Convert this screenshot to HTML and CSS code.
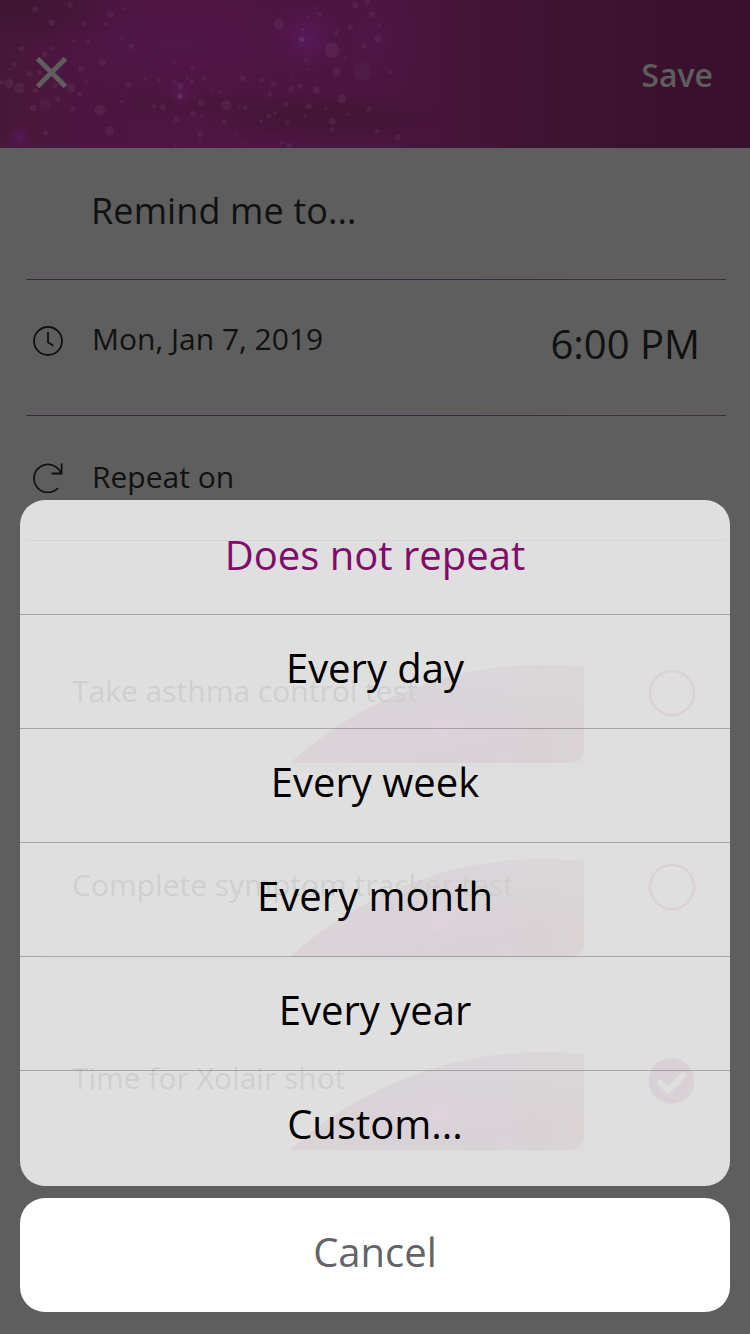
FILE: index.html
```html
<!DOCTYPE html>
<html lang="en">
<head>
<meta charset="utf-8">
<title>Reminder</title>
<link rel="stylesheet" href="styles.css">
</head>
<body>
<div class="screen">
  <header class="header">
    <svg class="header-art" viewBox="0 0 2250 444" preserveAspectRatio="none" aria-hidden="true">
      <defs>
        <linearGradient id="base" x1="0" x2="1"><stop offset="0" stop-color="#461838"/><stop offset=".12" stop-color="#4e1543"/><stop offset=".3" stop-color="#4f1543"/><stop offset=".5" stop-color="#4b1540"/><stop offset=".6" stop-color="#46143a"/><stop offset=".7" stop-color="#401434"/><stop offset=".86" stop-color="#3a122f"/><stop offset="1" stop-color="#38102b"/></linearGradient>
        <radialGradient id="glow"><stop offset="0" stop-color="#571a5b"/><stop offset=".5" stop-color="#551650" stop-opacity=".6"/><stop offset="1" stop-color="#501546" stop-opacity="0"/></radialGradient>
        <radialGradient id="shade"><stop offset="0" stop-color="#3f1533"/><stop offset=".6" stop-color="#411536" stop-opacity=".65"/><stop offset="1" stop-color="#451539" stop-opacity="0"/></radialGradient>
      </defs>
      <rect width="2250" height="444" fill="url(#base)"/>
      <ellipse cx="60" cy="20" rx="330" ry="130" fill="url(#shade)"/>
      <ellipse cx="530" cy="130" rx="480" ry="180" fill="url(#glow)" opacity=".25"/>
      <ellipse cx="1130" cy="120" rx="190" ry="200" fill="url(#glow)" opacity=".25"/>
      <ellipse cx="980" cy="355" rx="390" ry="75" fill="url(#shade)" opacity=".85"/>
      <ellipse cx="600" cy="312" rx="370" ry="40" fill="url(#shade)" opacity=".5"/>
      <circle cx="920" cy="115" r="115" fill="url(#glow)"/>
      <circle cx="542" cy="280" r="55" fill="url(#glow)" opacity=".7"/>
      <circle cx="58" cy="415" r="42" fill="url(#glow)"/>
      <g fill="#76566f" fill-opacity=".2">
        <circle cx="105" cy="27" r="9"/><circle cx="210" cy="15" r="9"/><circle cx="194" cy="9" r="4"/><circle cx="155" cy="67" r="10"/><circle cx="331" cy="43" r="10"/><circle cx="250" cy="70" r="7"/><circle cx="319" cy="72" r="6"/><circle cx="369" cy="26" r="5"/><circle cx="222" cy="122" r="5"/><circle cx="265" cy="123" r="6"/><circle cx="365" cy="116" r="4"/><circle cx="394" cy="139" r="9"/><circle cx="64" cy="147" r="8"/><circle cx="153" cy="145" r="6"/><circle cx="134" cy="163" r="8"/><circle cx="42" cy="193" r="8"/><circle cx="88" cy="221" r="9"/><circle cx="118" cy="217" r="7"/><circle cx="29" cy="208" r="4"/><circle cx="27" cy="250" r="14"/><circle cx="59" cy="264" r="16"/><circle cx="5" cy="247" r="7"/><circle cx="106" cy="271" r="8"/><circle cx="165" cy="256" r="8"/><circle cx="213" cy="264" r="14"/><circle cx="243" cy="207" r="9"/><circle cx="307" cy="188" r="10"/><circle cx="258" cy="247" r="4"/><circle cx="239" cy="283" r="8"/><circle cx="174" cy="297" r="8"/><circle cx="136" cy="313" r="17" opacity=".5"/><circle cx="100" cy="324" r="10"/><circle cx="218" cy="328" r="7"/><circle cx="299" cy="330" r="16"/><circle cx="136" cy="399" r="8"/><circle cx="329" cy="393" r="13"/><circle cx="366" cy="305" r="6"/><circle cx="386" cy="254" r="9"/><circle cx="436" cy="236" r="6"/><circle cx="477" cy="242" r="7"/><circle cx="522" cy="188" r="4"/><circle cx="577" cy="206" r="6"/><circle cx="562" cy="234" r="5"/><circle cx="523" cy="244" r="7"/><circle cx="575" cy="244" r="7"/><circle cx="612" cy="236" r="7"/><circle cx="541" cy="258" r="10"/><circle cx="539" cy="289" r="8" fill-opacity=".4"/><circle cx="583" cy="292" r="4"/><circle cx="604" cy="309" r="11"/><circle cx="634" cy="272" r="4"/><circle cx="662" cy="277" r="5"/><circle cx="679" cy="316" r="16"/><circle cx="718" cy="321" r="5"/><circle cx="735" cy="323" r="8"/><circle cx="462" cy="319" r="7"/><circle cx="489" cy="322" r="9"/><circle cx="529" cy="358" r="9"/><circle cx="580" cy="340" r="8"/><circle cx="604" cy="349" r="4"/><circle cx="602" cy="401" r="9"/><circle cx="673" cy="365" r="7"/><circle cx="600" cy="425" r="4"/><circle cx="527" cy="434" r="5"/><circle cx="705" cy="405" r="4"/><circle cx="736" cy="430" r="4"/><circle cx="728" cy="235" r="9"/><circle cx="784" cy="241" r="7"/><circle cx="821" cy="251" r="8"/><circle cx="809" cy="284" r="7"/><circle cx="874" cy="266" r="9"/><circle cx="900" cy="259" r="8"/><circle cx="949" cy="270" r="10"/><circle cx="857" cy="312" r="8"/><circle cx="824" cy="338" r="6"/><circle cx="806" cy="348" r="7"/><circle cx="784" cy="364" r="6"/><circle cx="862" cy="368" r="7"/><circle cx="915" cy="350" r="5"/><circle cx="926" cy="318" r="9"/><circle cx="977" cy="327" r="5"/><circle cx="1026" cy="296" r="13"/><circle cx="997" cy="364" r="11"/><circle cx="996" cy="388" r="7"/><circle cx="1046" cy="343" r="5"/><circle cx="1106" cy="328" r="8"/><circle cx="845" cy="428" r="6"/><circle cx="868" cy="437" r="8"/><circle cx="837" cy="71" r="16"/><circle cx="997" cy="151" r="23"/><circle cx="1009" cy="215" r="12"/><circle cx="1088" cy="215" r="28" opacity=".45"/><circle cx="905" cy="118" r="8" fill-opacity=".4"/><circle cx="908" cy="89" r="5"/><circle cx="927" cy="51" r="5"/><circle cx="958" cy="42" r="7"/><circle cx="948" cy="24" r="4"/><circle cx="1009" cy="98" r="7"/><circle cx="1051" cy="81" r="8"/><circle cx="1066" cy="15" r="9"/><circle cx="1102" cy="6" r="8"/><circle cx="1115" cy="43" r="9"/><circle cx="1035" cy="173" r="6"/><circle cx="1091" cy="138" r="8"/><circle cx="917" cy="180" r="6"/><circle cx="928" cy="165" r="4"/><circle cx="922" cy="207" r="4"/><circle cx="876" cy="183" r="3"/><circle cx="876" cy="237" r="3"/><circle cx="1134" cy="118" r="10"/><circle cx="1137" cy="77" r="5"/><circle cx="1171" cy="216" r="5"/><circle cx="1130" cy="393" r="7"/><circle cx="1193" cy="412" r="9"/>
      </g>
    </svg>
    <svg class="close" viewBox="0 0 30 30" aria-hidden="true"><path d="M1.500 1.500 28.500 28.500M28.500 1.500 1.500 28.500"/></svg>
    <span class="save">Save</span>
  </header>

  <main class="form">
    <div class="row title-row"><span class="title">Remind me to...</span></div>
    <div class="row date-row">
      <svg class="icon" viewBox="0 0 30 30" aria-hidden="true"><circle cx="15" cy="15" r="14"/><path d="M15 6v10.3l5.3 3.4"/></svg>
      <span class="label">Mon, Jan 7, 2019</span>
      <span class="time">6:00 PM</span>
    </div>
    <div class="row repeat-row">
      <svg class="icon" viewBox="0 0 30 30" aria-hidden="true"><path d="M25 25.2A14 14 0 1 1 28 10.3M28.6 .5V10.500H18.500"/></svg>
      <span class="label">Repeat on</span>
    </div>
    <svg class="defs" aria-hidden="true">
      <defs>
        <linearGradient id="petal" x1="0" x2="1"><stop offset="0" stop-color="#4c2635"/><stop offset=".35" stop-color="#40203c"/><stop offset=".7" stop-color="#3f2036"/><stop offset="1" stop-color="#402429"/></linearGradient>
        <linearGradient id="fade" x1="0" x2="0" y1="0" y2="1"><stop offset="0" stop-color="#5e5e5e" stop-opacity=".32"/><stop offset=".7" stop-color="#5e5e5e" stop-opacity="0"/></linearGradient>
        <radialGradient id="bloom"><stop offset="0" stop-color="#712e68"/><stop offset=".4" stop-color="#5c2450" stop-opacity=".55"/><stop offset="1" stop-color="#4c1f42" stop-opacity="0"/></radialGradient>
        <linearGradient id="badge" x1="0" x2="1"><stop offset="0" stop-color="#3a1a3b"/><stop offset="1" stop-color="#421c2b"/></linearGradient>
        <symbol id="swoosh" viewBox="0 0 294 100">
          <path d="M0 100C68 38 160 2 250 2Q274 2 294 4V100Z" fill="url(#petal)"/>
          <path d="M0 100C68 38 160 2 250 2Q274 2 294 4V100Z" fill="url(#fade)"/>
          <ellipse cx="165" cy="62" rx="85" ry="20" fill="url(#bloom)" opacity=".5"/>
          <circle cx="148" cy="65" r="28" fill="url(#bloom)" opacity=".85"/>
          <circle cx="216" cy="93" r="10" fill="url(#bloom)" opacity=".7"/>
        </symbol>
      </defs>
    </svg>
    <ul class="tasks">
      <li class="task">
        <div class="card"><svg class="swoosh"><use href="#swoosh"/></svg><span class="task-name">Take asthma control test</span></div>
        <svg class="check" viewBox="0 0 48 48"><circle class="ring" cx="24" cy="24" r="22"/></svg>
      </li>
      <li class="task">
        <div class="card"><svg class="swoosh"><use href="#swoosh"/></svg><span class="task-name">Complete symptom tracker test</span></div>
        <svg class="check" viewBox="0 0 48 48"><circle class="ring" cx="24" cy="24" r="22"/></svg>
      </li>
      <li class="task">
        <div class="card"><svg class="swoosh"><use href="#swoosh"/></svg><span class="task-name">Time for Xolair shot</span></div>
        <svg class="check" viewBox="0 0 48 48"><circle cx="23.500" cy="25" r="23" fill="url(#badge)"/><path class="tick" d="M10 24.500 20 34.500 37 17.500"/></svg>
      </li>
    </ul>
  </main>

  <div class="sheet">
    <ul class="options">
      <li class="option selected">Does not repeat</li>
      <li class="option">Every day</li>
      <li class="option">Every week</li>
      <li class="option">Every month</li>
      <li class="option">Every year</li>
      <li class="option">Custom...</li>
    </ul>
    <div class="cancel">Cancel</div>
  </div>
</div>
</body>
</html>
```
FILE: styles.css
```css
* { box-sizing: border-box; }
body { margin: 0; font-family: "Open Sans", "Noto Sans", sans-serif; }
ul { list-style: none; margin: 0; padding: 0; }

.screen {
  position: relative;
  width: 750px;
  height: 1334px;
  overflow: hidden;
  background: #5e5e5e;
  color: #111;
}

.header {
  position: relative;
  height: 148px;
  padding: 0 37px 0 36px;
  display: flex;
  align-items: center;
  justify-content: space-between;
}
.header-art {
  position: absolute;
  left: 0;
  top: 0;
  width: 750px;
  height: 148px;
}
.close {
  position: relative;
  width: 31px;
  height: 31px;
  margin-bottom: 4px;
  fill: none;
  stroke: #5e5e5e;
  stroke-width: 4.800;
}
.save {
  position: relative;
  color: #5e5e5e;
  font-size: 32px;
  font-weight: 600;
  line-height: 44px;
  padding-top: 2px;
}

.row {
  margin: 0 24px 0 26px;
  display: flex;
  align-items: center;
  border-bottom: 1px solid;
  border-image: linear-gradient(90deg, #472041, #47203f 50%, #4c2c36) 1;
}
.title-row { height: 132px; padding: 0 0 6px 65px; }
.date-row { height: 136px; padding: 0 26px 14px 7px; }
.repeat-row { height: 125px; padding: 0 26px 0 7px; }
.title { font-size: 36px; line-height: 48px; letter-spacing: .1px; }
.label { font-size: 30px; line-height: 40px; padding-bottom: 3px; }
.time { margin-left: auto; font-size: 40px; line-height: 54px; padding-top: 6px; }
.icon {
  width: 30px;
  height: 30px;
  margin-right: 29px;
  fill: none;
  stroke: #111;
  stroke-width: 1.800;
}

.defs { display: block; width: 0; height: 0; }
.tasks {
  padding: 82px 54px 0 36px;
  display: flex;
  flex-direction: column;
  gap: 53.700px;
}
.task { display: flex; align-items: center; justify-content: space-between; }
.card {
  position: relative;
  width: 548px;
  height: 140px;
  padding: 0 36px 4px;
  display: flex;
  align-items: center;
  overflow: hidden;
  border-radius: 14px;
  background: #5e5e5e;
  box-shadow: 4px 5px 6px -1px rgba(0, 0, 0, .12);
}
.swoosh { position: absolute; right: 0; bottom: 0; width: 294px; height: 100px; }
.task-name { position: relative; font-size: 30px; line-height: 40px; color: #111; }
.check { width: 48px; height: 48px; }
.ring { fill: none; stroke: #4a1c38; stroke-width: 2.600; }
.tick { fill: none; stroke: #5e5e5e; stroke-width: 6; }

.sheet {
  position: absolute;
  left: 20px;
  right: 20px;
  bottom: 22px;
  display: flex;
  flex-direction: column;
  gap: 12px;
  font-size: 40px;
  line-height: 54px;
  text-align: center;
}
.options {
  border-radius: 25px;
  overflow: hidden;
  background: rgba(255, 255, 255, .8);
  color: #000;
}
.option, .cancel {
  height: 114px;
  display: flex;
  align-items: center;
  justify-content: center;
  padding-bottom: 6px;
}
.option { padding-bottom: 7px; }
.option + .option { border-top: 1px solid rgba(0, 0, 0, .25); }
.option:last-child { height: 116px; padding-bottom: 9px; }
.option.selected { padding-bottom: 4px; color: #820a6b; }
.cancel { border-radius: 25px; background: #fff; color: #626469; }
```
